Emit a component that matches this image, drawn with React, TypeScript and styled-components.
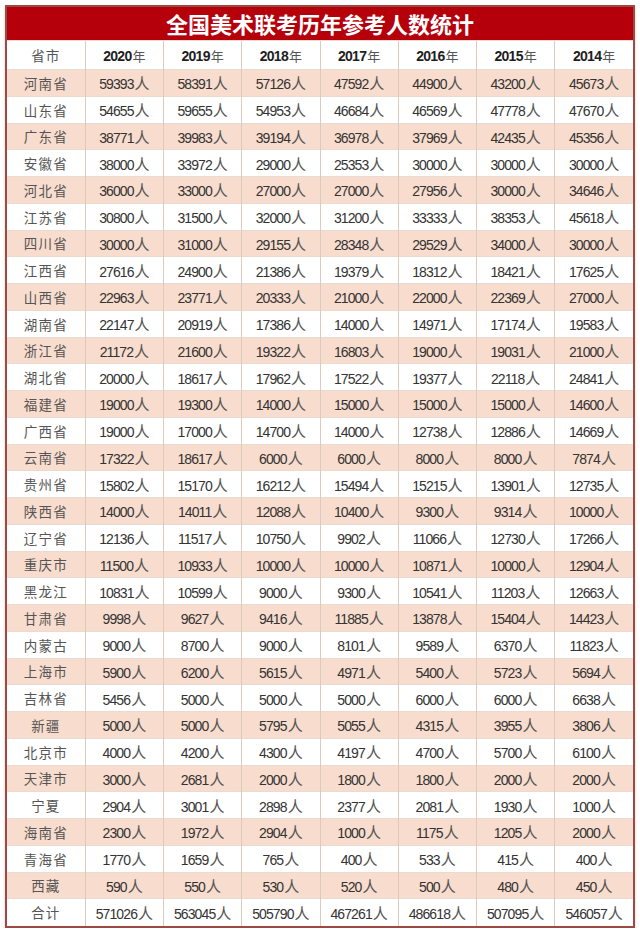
import styled, { createGlobalStyle } from "styled-components";

const GlobalStyle = createGlobalStyle`
  html, body {
    margin: 0;
    padding: 0;
    background: #fff;
  }
`;

const years = ["2020", "2019", "2018", "2017", "2016", "2015", "2014"];

const rows: [string, number[]][] = [
  ["河南省", [59393, 58391, 57126, 47592, 44900, 43200, 45673]],
  ["山东省", [54655, 59655, 54953, 46684, 46569, 47778, 47670]],
  ["广东省", [38771, 39983, 39194, 36978, 37969, 42435, 45356]],
  ["安徽省", [38000, 33972, 29000, 25353, 30000, 30000, 30000]],
  ["河北省", [36000, 33000, 27000, 27000, 27956, 30000, 34646]],
  ["江苏省", [30800, 31500, 32000, 31200, 33333, 38353, 45618]],
  ["四川省", [30000, 31000, 29155, 28348, 29529, 34000, 30000]],
  ["江西省", [27616, 24900, 21386, 19379, 18312, 18421, 17625]],
  ["山西省", [22963, 23771, 20333, 21000, 22000, 22369, 27000]],
  ["湖南省", [22147, 20919, 17386, 14000, 14971, 17174, 19583]],
  ["浙江省", [21172, 21600, 19322, 16803, 19000, 19031, 21000]],
  ["湖北省", [20000, 18617, 17962, 17522, 19377, 22118, 24841]],
  ["福建省", [19000, 19300, 14000, 15000, 15000, 15000, 14600]],
  ["广西省", [19000, 17000, 14700, 14000, 12738, 12886, 14669]],
  ["云南省", [17322, 18617, 6000, 6000, 8000, 8000, 7874]],
  ["贵州省", [15802, 15170, 16212, 15494, 15215, 13901, 12735]],
  ["陕西省", [14000, 14011, 12088, 10400, 9300, 9314, 10000]],
  ["辽宁省", [12136, 11517, 10750, 9902, 11066, 12730, 17266]],
  ["重庆市", [11500, 10933, 10000, 10000, 10871, 10000, 12904]],
  ["黑龙江", [10831, 10599, 9000, 9300, 10541, 11203, 12663]],
  ["甘肃省", [9998, 9627, 9416, 11885, 13878, 15404, 14423]],
  ["内蒙古", [9000, 8700, 9000, 8101, 9589, 6370, 11823]],
  ["上海市", [5900, 6200, 5615, 4971, 5400, 5723, 5694]],
  ["吉林省", [5456, 5000, 5000, 5000, 6000, 6000, 6638]],
  ["新疆", [5000, 5000, 5795, 5055, 4315, 3955, 3806]],
  ["北京市", [4000, 4200, 4300, 4197, 4700, 5700, 6100]],
  ["天津市", [3000, 2681, 2000, 1800, 1800, 2000, 2000]],
  ["宁夏", [2904, 3001, 2898, 2377, 2081, 1930, 1000]],
  ["海南省", [2300, 1972, 2904, 1000, 1175, 1205, 2000]],
  ["青海省", [1770, 1659, 765, 400, 533, 415, 400]],
  ["西藏", [590, 550, 530, 520, 500, 480, 450]],
  ["合计", [571026, 563045, 505790, 467261, 486618, 507095, 546057]],
];

export default function App() {
  return (
    <>
      <GlobalStyle />
      <Frame>
        <Title>全国美术联考历年参考人数统计</Title>
        <Table>
          <thead>
            <HeadRow>
              <NameCell as="th">省市</NameCell>
              {years.map((y) => (
                <YearCell key={y}>
                  {y}
                  <Unit $size={13}>年</Unit>
                </YearCell>
              ))}
            </HeadRow>
          </thead>
          <tbody>
            {rows.map(([name, nums], i) => (
              <Row key={name} $tinted={i % 2 === 0}>
                <NameCell>{name}</NameCell>
                {nums.map((n, j) => (
                  <NumCell key={j}>
                    {n}
                    <Unit $size={15}>人</Unit>
                  </NumCell>
                ))}
              </Row>
            ))}
          </tbody>
        </Table>
      </Frame>
    </>
  );
}

const Frame = styled.div`
  box-sizing: border-box;
  width: 630px;
  margin: 5px 0 0 5px;
  border: 2px solid #9c4a42;
  box-shadow: 0 2px 3px rgba(0, 0, 0, 0.18);
  background: #fff;
`;

const Title = styled.div`
  height: 33px;
  background: #b5000c;
  color: #fff;
  font-family: "Noto Sans CJK SC", sans-serif;
  font-weight: 700;
  font-size: 22px;
  line-height: 33px;
  text-align: center;
`;

const Table = styled.table`
  width: 100%;
  table-layout: fixed;
  border-collapse: collapse;
  font-family: "Liberation Sans", "Noto Sans CJK SC", sans-serif;
`;

const HeadRow = styled.tr`
  height: 29px;
  background: #fff;
`;

const Row = styled.tr<{ $tinted: boolean }>`
  height: 26.75px;
  background: ${(p) => (p.$tinted ? "#f8dccd" : "#fff")};
`;

const Cell = styled.td`
  padding: 0;
  text-align: center;
  vertical-align: middle;
  border-left: 1px solid #dccabf;
  border-top: 1px solid #eadbd2;
  white-space: nowrap;
  &:first-child {
    border-left: none;
  }
`;

const NameCell = styled(Cell)`
  font-family: "Noto Sans CJK SC", sans-serif;
  font-weight: 400;
  font-size: 13.5px;
  letter-spacing: 1.2px;
  color: #555;
`;

const YearCell = styled(Cell).attrs({ as: "th" })`
  font-weight: 700;
  font-size: 14px;
  letter-spacing: -0.7px;
  color: #1e1e1e;
`;

const NumCell = styled(Cell)`
  font-size: 14px;
  letter-spacing: -0.9px;
  color: #333;
`;

const Unit = styled.span<{ $size: number }>`
  font-family: "Noto Sans CJK SC", sans-serif;
  font-weight: 400;
  font-size: ${(p) => p.$size}px;
  letter-spacing: 0;
  color: #555;
  margin-left: 1px;
`;
